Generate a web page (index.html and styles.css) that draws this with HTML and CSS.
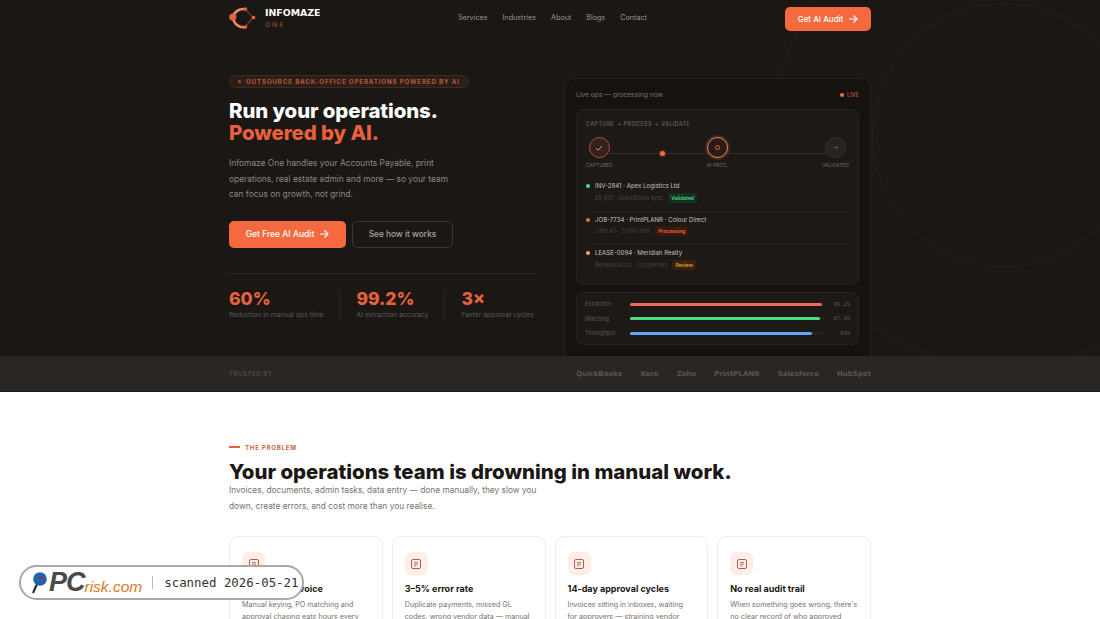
FILE: index.html
```html
<!DOCTYPE html>
<html lang="en">
<head>
  <meta charset="UTF-8">
  <meta name="viewport" content="width=device-width, initial-scale=1.0">
  <title>Infomaze One</title>
  <link rel="stylesheet" href="styles.css">
</head>
<body>

  <div class="hero">
    <div class="ring ring-small"></div>
    <div class="ring ring-big"></div>

    <div class="wrap">
      <header class="top-bar">
        <div class="brand">
          <svg class="brand-mark" width="28" height="24" viewBox="0 0 28 24">
            <path d="M16 3L24 11.5L16 21" fill="none" stroke="#b5533a" stroke-width="1"/>
            <path d="M16.5 3.2A10.5 10 0 0 0 4 11M4 11A10.5 10.5 0 0 0 16.5 21" fill="none" stroke="#f08a68" stroke-width="2.6"/>
            <circle cx="3.8" cy="11" r="3.6" fill="#e8613c"/>
            <circle cx="16.5" cy="3" r="1.8" fill="#e8613c"/>
            <circle cx="16.5" cy="21" r="1.8" fill="#e8613c"/>
            <circle cx="24.5" cy="11.5" r="1.8" fill="#e8613c"/>
          </svg>
          <div class="brand-text">
            <span class="brand-name">INFOMAZE</span>
            <span class="brand-sub">ONE</span>
          </div>
        </div>
        <nav class="nav">
          <a href="#">Services</a>
          <a href="#">Industries</a>
          <a href="#">About</a>
          <a href="#">Blogs</a>
          <a href="#">Contact</a>
        </nav>
        <a class="btn btn-nav" href="#">Get AI Audit
          <svg width="10" height="10" viewBox="0 0 10 10"><path d="M1 5h8M5.5 1.5L9 5L5.5 8.5" fill="none" stroke="#fff" stroke-width="1.2"/></svg>
        </a>
      </header>

      <div class="hero-grid">
        <!-- left copy -->
        <div class="hero-copy">
          <div class="pill"><span class="pill-dot"></span>OUTSOURCE BACK-OFFICE OPERATIONS POWERED BY AI</div>
          <h1>Run your operations.<br><span class="accent">Powered by AI.</span></h1>
          <p class="lead">Infomaze One handles your Accounts Payable, print operations, real estate admin and more — so your team can focus on growth, not grind.</p>
          <div class="cta-row">
            <a class="btn btn-main" href="#">Get Free AI Audit
              <svg width="10" height="10" viewBox="0 0 10 10"><path d="M1 5h8M5.5 1.5L9 5L5.5 8.5" fill="none" stroke="#fff" stroke-width="1.2"/></svg>
            </a>
            <a class="btn btn-ghost" href="#">See how it works</a>
          </div>
          <div class="stats">
            <div class="stat">
              <div class="stat-num">60%</div>
              <div class="stat-label">Reduction in manual ops time</div>
            </div>
            <div class="stat">
              <div class="stat-num">99.2%</div>
              <div class="stat-label">AI extraction accuracy</div>
            </div>
            <div class="stat">
              <div class="stat-num">3×</div>
              <div class="stat-label">Faster approval cycles</div>
            </div>
          </div>
        </div>

        <!-- live panel -->
        <div class="panel">
          <div class="panel-head">
            <span>Live ops — processing now</span>
            <span class="live"><span class="live-dot"></span>LIVE</span>
          </div>
          <div class="flow-card">
            <div class="flow-title">CAPTURE → PROCESS → VALIDATE</div>
            <div class="flow">
              <div class="flow-line"></div>
              <div class="flow-pulse"></div>
              <div class="step">
                <div class="node node-done">
                  <svg width="8" height="8" viewBox="0 0 8 8"><path d="M1 4.2L3.2 6.2L7 2" fill="none" stroke="#d9a08c" stroke-width="1"/></svg>
                </div>
                <span>CAPTURED</span>
              </div>
              <div class="step">
                <div class="node node-active"><span class="node-core"></span></div>
                <span>AI PROC.</span>
              </div>
              <div class="step">
                <div class="node node-idle">
                  <svg width="5" height="5" viewBox="0 0 10 10"><path d="M1 5h8M6 2l3 3l-3 3" fill="none" stroke="#6b6763" stroke-width="1.4"/></svg>
                </div>
                <span>VALIDATED</span>
              </div>
            </div>
            <div class="jobs">
              <div class="job">
                <div class="job-title"><span class="job-dot dot-green"></span>INV-2841 · Apex Logistics Ltd</div>
                <div class="job-meta">£8,450 · QuickBooks sync <span class="tag tag-green">Validated</span></div>
              </div>
              <div class="job">
                <div class="job-title"><span class="job-dot dot-red"></span>JOB-7734 · PrintPLANR · Colour Direct</div>
                <div class="job-meta">Litho A3 · 5,000 units <span class="tag tag-red">Processing</span></div>
              </div>
              <div class="job">
                <div class="job-title"><span class="job-dot dot-amber"></span>LEASE-0094 · Meridian Realty</div>
                <div class="job-meta">Renewal docs · 3 properties <span class="tag tag-amber">Review</span></div>
              </div>
            </div>
          </div>
          <div class="meter-card">
            <div class="meter"><span class="meter-name">Extraction</span><div class="track"><div class="fill fill-red" style="width: 99.2%"></div></div><span class="meter-val">99.2%</span></div>
            <div class="meter"><span class="meter-name">Matching</span><div class="track"><div class="fill fill-green" style="width: 97.8%"></div></div><span class="meter-val">97.8%</span></div>
            <div class="meter"><span class="meter-name">Throughput</span><div class="track"><div class="fill fill-blue" style="width: 94%"></div></div><span class="meter-val">94%</span></div>
          </div>
        </div>
      </div>
    </div>
  </div>

  <div class="trust">
    <div class="wrap trust-row">
      <span class="trust-label">TRUSTED BY</span>
      <div class="trust-logos">
        <span>QuickBooks</span>
        <span>Xero</span>
        <span>Zoho</span>
        <span>PrintPLANR</span>
        <span>Salesforce</span>
        <span>HubSpot</span>
      </div>
    </div>
  </div>

  <section class="problem">
    <div class="wrap">
      <div class="eyebrow"><span class="eyebrow-line"></span>THE PROBLEM</div>
      <h2>Your operations team is drowning in manual work.</h2>
      <p class="problem-lead">Invoices, documents, admin tasks, data entry — done manually, they slow you down, create errors, and cost more than you realise.</p>
      <div class="cards">
        <div class="card">
          <div class="card-icon"><svg width="12" height="12" viewBox="0 0 12 12"><rect x="1.5" y="1.5" width="9" height="9" rx="1.5" fill="none" stroke="#a8614a" stroke-width="1"/><path d="M4 4.5h4M4 6.2h4M4 7.9h2.4" stroke="#a8614a" stroke-width=".8"/></svg></div>
          <h3>45 min per invoice</h3>
          <p>Manual keying, PO matching and approval chasing eats hours every</p>
        </div>
        <div class="card">
          <div class="card-icon"><svg width="12" height="12" viewBox="0 0 12 12"><rect x="1.5" y="1.5" width="9" height="9" rx="1.5" fill="none" stroke="#a8614a" stroke-width="1"/><path d="M4 4.5h4M4 6.2h4M4 7.9h2.4" stroke="#a8614a" stroke-width=".8"/></svg></div>
          <h3>3–5% error rate</h3>
          <p>Duplicate payments, missed GL codes, wrong vendor data — manual</p>
        </div>
        <div class="card">
          <div class="card-icon"><svg width="12" height="12" viewBox="0 0 12 12"><rect x="1.5" y="1.5" width="9" height="9" rx="1.5" fill="none" stroke="#a8614a" stroke-width="1"/><path d="M4 4.5h4M4 6.2h4M4 7.9h2.4" stroke="#a8614a" stroke-width=".8"/></svg></div>
          <h3>14-day approval cycles</h3>
          <p>Invoices sitting in inboxes, waiting<br>for approvers — straining vendor</p>
        </div>
        <div class="card">
          <div class="card-icon"><svg width="12" height="12" viewBox="0 0 12 12"><rect x="1.5" y="1.5" width="9" height="9" rx="1.5" fill="none" stroke="#a8614a" stroke-width="1"/><path d="M4 4.5h4M4 6.2h4M4 7.9h2.4" stroke="#a8614a" stroke-width=".8"/></svg></div>
          <h3>No real audit trail</h3>
          <p>When something goes wrong, there's no clear record of who approved</p>
        </div>
      </div>
    </div>
  </section>

  <!-- scan stamp sits over the page -->
  <div class="stamp">
    <svg class="stamp-mark" width="18" height="24" viewBox="0 0 18 24">
      <path d="M6 13L2 22" stroke="#222" stroke-width="2"/>
      <circle cx="9" cy="8" r="6.8" fill="#1f62ad"/>
      <circle cx="10.5" cy="7" r="2" fill="#8c3a4a"/>
    </svg>
    <span class="stamp-pc">PC</span><span class="stamp-risk">risk.com</span>
    <span class="stamp-sep"></span>
    <span class="stamp-date">scanned 2026-05-21</span>
  </div>

</body>
</html>
```

FILE: styles.css
```css
* {
  margin: 0;
  padding: 0;
  box-sizing: border-box;
}

html, body {
  height: 100%;
  overflow: hidden;
}

body {
  position: relative;
  font-family: 'Inter', sans-serif;
  background: #fff;
  color: #1a1714;
}

a {
  text-decoration: none;
}

.wrap {
  width: 642px;
  margin: 0 auto;
}

/* hero */
.hero {
  position: relative;
  height: 356px;
  overflow: hidden;
  background: #1a1714;
}

.hero .wrap {
  position: relative;
}

.ring {
  position: absolute;
  border: 1px solid rgba(232, 97, 60, 0.07);
  border-radius: 50%;
}

.ring-small {
  left: 872px;
  top: 3px;
  width: 264px;
  height: 264px;
}

.ring-big {
  left: 772px;
  top: -97px;
  width: 464px;
  height: 464px;
}

.top-bar {
  display: flex;
  align-items: center;
  height: 36px;
}

.brand {
  display: flex;
  align-items: center;
  gap: 8px;
  width: 229px;
}

.brand-text {
  display: flex;
  flex-direction: column;
}

.brand-name {
  font-family: 'DejaVu Sans', sans-serif;
  font-size: 9.4px;
  font-weight: 700;
  line-height: 11px;
  color: #fff;
}

.brand-sub {
  margin-top: 3px;
  font-size: 6.5px;
  line-height: 9px;
  letter-spacing: 2.2px;
  color: #a8533c;
}

.nav {
  display: flex;
  gap: 15px;
  flex: 1;
  margin-bottom: 2px;
}

.nav a {
  font-size: 7.2px;
  color: #9b9690;
}

.btn {
  display: inline-flex;
  align-items: center;
  justify-content: center;
  border-radius: 5px;
  font-weight: 500;
}

.btn-nav {
  gap: 5px;
  width: 86px;
  height: 24px;
  margin-top: 1px;
  font-size: 8px;
  color: #fff;
  background: #f4693e;
}

.hero-grid {
  display: grid;
  grid-template-columns: 307px 307px;
  justify-content: space-between;
  margin-top: 39px;
}

.pill {
  display: flex;
  align-items: center;
  gap: 5px;
  width: fit-content;
  height: 13px;
  padding: 0 8px;
  font-size: 6.2px;
  font-weight: 700;
  letter-spacing: 0.85px;
  white-space: nowrap;
  color: #b85a40;
  background: #2b1e19;
  border: 1px solid #43291f;
  border-radius: 7px;
}

.pill-dot {
  width: 3px;
  height: 3px;
  border-radius: 50%;
  background: #a0503a;
}

h1 {
  margin-top: 12px;
  font-size: 20.4px;
  font-weight: 800;
  line-height: 22px;
  letter-spacing: -0.1px;
  color: #fff;
}

.accent {
  color: #e8613c;
}

.lead {
  width: 225px;
  margin-top: 12px;
  font-size: 8.4px;
  line-height: 15.5px;
  color: #8d8883;
}

.cta-row {
  display: flex;
  gap: 6px;
  margin-top: 18px;
}

.btn-main {
  gap: 5px;
  width: 117px;
  height: 27px;
  font-size: 8.5px;
  color: #fff;
  background: #f4693e;
}

.btn-ghost {
  width: 101px;
  height: 27px;
  font-size: 8.3px;
  color: #a8a39d;
  border: 1px solid #3a3632;
}

.stats {
  display: flex;
  margin-top: 25px;
  padding-top: 15px;
  border-top: 1px solid #2a2623;
}

.stat {
  padding-right: 16px;
  margin-right: 16px;
  border-right: 1px solid #2a2623;
}

.stat:last-child {
  border-right: none;
}

.stat-num {
  font-size: 17.5px;
  font-weight: 800;
  line-height: 20px;
  color: #e8613c;
}

.stat-label {
  font-size: 6.8px;
  line-height: 11px;
  color: #5e5a56;
  white-space: nowrap;
}

/* live panel */
.panel {
  height: 300px;
  margin-top: 3px;
  padding: 10px 11px;
  background: #151210;
  border: 1px solid #26221f;
  border-radius: 10px;
}

.panel-head {
  display: flex;
  justify-content: space-between;
  align-items: center;
  height: 11px;
  font-size: 6.7px;
  color: #7a7672;
}

.live {
  display: flex;
  align-items: center;
  gap: 3px;
  font-size: 5.5px;
  font-weight: 600;
  color: #a8533c;
}

.live-dot {
  width: 4px;
  height: 4px;
  border-radius: 50%;
  background: #f4693e;
}

.flow-card {
  height: 176px;
  margin-top: 9px;
  padding: 11px 9px 9px;
  background: #1c1916;
  border: 1px solid #26221f;
  border-radius: 7px;
}

.flow-title {
  font-size: 5.5px;
  font-weight: 600;
  line-height: 7px;
  letter-spacing: 0.35px;
  color: #5e5a56;
}

.flow {
  position: relative;
  display: flex;
  justify-content: space-between;
  margin-top: 9px;
}

.flow-line {
  position: absolute;
  left: 12px;
  right: 14px;
  top: 16px;
  height: 1px;
  background: #2f2b27;
}

.flow-pulse {
  position: absolute;
  left: 74px;
  top: 14px;
  width: 5px;
  height: 5px;
  border-radius: 50%;
  background: #f4693e;
  box-shadow: 0 0 3px rgba(244, 105, 62, 0.6);
}

.step {
  position: relative;
  display: flex;
  flex-direction: column;
  align-items: center;
  font-size: 5px;
  line-height: 6px;
  color: #6e6a66;
}

.node {
  display: flex;
  align-items: center;
  justify-content: center;
  width: 21px;
  height: 21px;
  margin-bottom: 4px;
  border-radius: 50%;
}

.node-done {
  background: #33201a;
  border: 1px solid #a8533c;
}

.node-active {
  background: #2a1c17;
  border: 1.5px solid #f08a68;
  box-shadow: 0 0 0 2px rgba(244, 105, 62, 0.18);
}

.node-core {
  width: 5px;
  height: 5px;
  border: 1px solid #e8613c;
  border-radius: 50%;
}

.node-idle {
  background: #262320;
  border: 1px solid #33302c;
}

.jobs {
  margin-top: 10px;
}

.job {
  padding: 3px 0 7px;
  border-bottom: 1px solid #26221f;
}

.job:last-child {
  border-bottom: none;
}

.job-title {
  display: flex;
  align-items: center;
  gap: 5px;
  font-size: 6.1px;
  line-height: 10px;
  color: #c7c2bc;
}

.job-dot {
  width: 4px;
  height: 4px;
  border-radius: 50%;
}

.dot-green { background: #4ade80; }
.dot-red { background: #f4693e; }
.dot-amber { background: #f5a962; }

.job-meta {
  margin-top: 1.5px;
  padding-left: 9px;
  font-size: 5.5px;
  line-height: 11px;
  color: #4a4642;
}

.tag {
  display: inline-block;
  padding: 0 3.5px;
  margin-left: 3px;
  font-size: 5px;
  font-weight: 600;
  line-height: 10px;
  border-radius: 2px;
}

.tag-green { color: #4ade80; background: #143020; }
.tag-red { color: #f4693e; background: #36190f; }
.tag-amber { color: #e59a3c; background: #33230f; }

.meter-card {
  display: flex;
  flex-direction: column;
  gap: 6.5px;
  height: 53px;
  margin-top: 7px;
  padding: 7px 8px;
  background: #1c1916;
  border: 1px solid #26221f;
  border-radius: 7px;
}

.meter {
  display: flex;
  align-items: center;
  height: 8px;
  font-size: 5.5px;
  color: #5e5a56;
}

.meter-name {
  width: 45px;
}

.track {
  flex: 1;
  height: 3px;
  background: #26221f;
  border-radius: 2px;
}

.fill {
  height: 100%;
  border-radius: 2px;
}

.fill-red { background: #ef6a50; }
.fill-green { background: #4ade80; }
.fill-blue { background: #60a5fa; }

.meter-val {
  width: 26px;
  font-family: 'Liberation Mono', monospace;
  text-align: right;
}

/* trusted by */
.trust {
  position: relative;
  height: 36px;
  background: #2a2623;
  border-bottom: 1px solid #1a1714;
}

.trust-row {
  display: flex;
  justify-content: space-between;
  align-items: center;
  height: 35px;
}

.trust-label {
  font-size: 6px;
  letter-spacing: 0.6px;
  color: #5e5a56;
}

.trust-logos {
  display: flex;
  gap: 18px;
  font-family: 'DejaVu Sans', sans-serif;
  font-size: 7px;
  font-weight: 700;
  color: #5a5652;
}

/* problem section */
.problem {
  padding-top: 51px;
  background: #fff;
}

.eyebrow {
  display: flex;
  align-items: center;
  gap: 5px;
  height: 8px;
  font-size: 6.2px;
  font-weight: 700;
  letter-spacing: 0.7px;
  color: #c8674a;
}

.eyebrow-line {
  width: 11px;
  height: 1.5px;
  background: #e8613c;
}

h2 {
  margin-top: 9px;
  font-size: 20.4px;
  font-weight: 800;
  line-height: 23px;
  color: #1a1714;
}

.problem-lead {
  width: 320px;
  font-size: 8.35px;
  line-height: 15.5px;
  color: #77726d;
}

.cards {
  display: grid;
  grid-template-columns: repeat(4, 1fr);
  gap: 9px;
  margin-top: 22px;
}

.card {
  height: 120px;
  padding: 15px 12px;
  border: 1px solid #ededeb;
  border-radius: 9px;
}

.card-icon {
  display: flex;
  align-items: center;
  justify-content: center;
  width: 23px;
  height: 23px;
  background: #fdeee8;
  border-radius: 6px;
}

.card h3 {
  margin-top: 7px;
  font-size: 9px;
  font-weight: 700;
  line-height: 14px;
  color: #1a1714;
}

.card p {
  margin-top: 3px;
  font-size: 7.2px;
  line-height: 12px;
  color: #77726d;
}

/* scan stamp */
.stamp {
  position: absolute;
  left: 19px;
  top: 565px;
  display: flex;
  align-items: center;
  width: 285px;
  height: 35px;
  padding-left: 10px;
  background: #fff;
  border: 2px solid #a9a9a9;
  border-radius: 18px;
}

.stamp-pc {
  font-family: 'Liberation Sans', sans-serif;
  font-size: 27px;
  font-weight: 700;
  font-style: italic;
  letter-spacing: -1px;
  color: #4a4a4a;
}

.stamp-risk {
  margin-top: 8px;
  font-family: 'Liberation Sans', sans-serif;
  font-size: 15.5px;
  font-style: italic;
  color: #d87a2a;
}

.stamp-sep {
  width: 1px;
  height: 13px;
  margin: 0 11px 0 10px;
  background: #bbb;
}

.stamp-date {
  font-family: 'DejaVu Sans Mono', monospace;
  font-size: 12.4px;
  color: #333;
}
```
